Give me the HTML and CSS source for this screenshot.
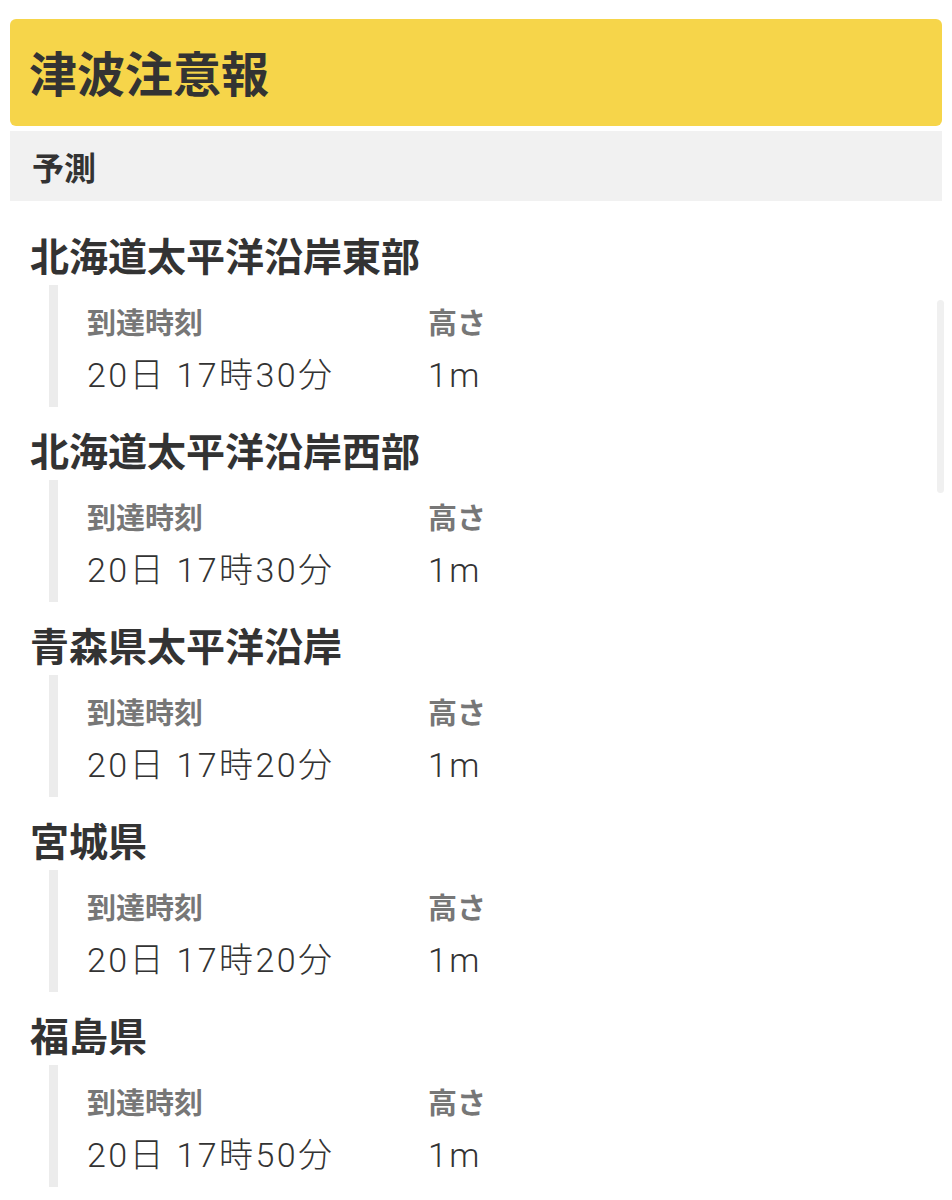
FILE: index.html
```html
<!DOCTYPE html>
<html lang="ja">
<head>
  <meta charset="UTF-8">
  <meta name="viewport" content="width=device-width, initial-scale=1.0">
  <title>津波注意報</title>
  <link rel="stylesheet" href="styles.css">
</head>
<body>
  <h1 class="warning-head">津波注意報</h1>
  <h3 class="sub-head">予測</h3>

  <div class="area-list">
    <div class="area">
      <h2 class="area-name">北海道太平洋沿岸東部</h2>
      <div class="area-info">
        <div class="info-row labels"><span class="col-time">到達時刻</span><span>高さ</span></div>
        <div class="info-row values"><span class="col-time">20日 17時30分</span><span>1m</span></div>
      </div>
    </div>
    <div class="area">
      <h2 class="area-name">北海道太平洋沿岸西部</h2>
      <div class="area-info">
        <div class="info-row labels"><span class="col-time">到達時刻</span><span>高さ</span></div>
        <div class="info-row values"><span class="col-time">20日 17時30分</span><span>1m</span></div>
      </div>
    </div>
    <div class="area">
      <h2 class="area-name">青森県太平洋沿岸</h2>
      <div class="area-info">
        <div class="info-row labels"><span class="col-time">到達時刻</span><span>高さ</span></div>
        <div class="info-row values"><span class="col-time">20日 17時20分</span><span>1m</span></div>
      </div>
    </div>
    <div class="area">
      <h2 class="area-name">宮城県</h2>
      <div class="area-info">
        <div class="info-row labels"><span class="col-time">到達時刻</span><span>高さ</span></div>
        <div class="info-row values"><span class="col-time">20日 17時20分</span><span>1m</span></div>
      </div>
    </div>
    <div class="area">
      <h2 class="area-name">福島県</h2>
      <div class="area-info">
        <div class="info-row labels"><span class="col-time">到達時刻</span><span>高さ</span></div>
        <div class="info-row values"><span class="col-time">20日 17時50分</span><span>1m</span></div>
      </div>
    </div>
  </div>

  <div class="scroll-thumb"></div>
</body>
</html>
```

FILE: styles.css
```css
body {
  margin: 0;
  padding: 19px 10px 0 10px;
  background: #fff;
  color: #333;
  font-family: "Noto Sans CJK JP", "Noto Sans", sans-serif;
  overflow: hidden;
}
h1, h2, h3 {
  margin: 0;
}
.warning-head {
  background: #f6d54a;
  border-radius: 6px;
  height: 107px;
  padding-left: 19px;
  font-size: 48px;
  font-weight: 700;
  line-height: 105px;
}
.sub-head {
  margin-top: 5px;
  background: #f1f1f1;
  height: 70px;
  padding-left: 22px;
  font-size: 32px;
  font-weight: 700;
  line-height: 70px;
}
.area-list {
  padding-top: 27px;
}
.area {
  margin-bottom: 16px;
}
.area-name {
  padding-left: 20px;
  margin-bottom: 4px;
  font-size: 39px;
  font-weight: 700;
  line-height: 53px;
}
.area-info {
  margin-left: 39px;
  border-left: 9px solid #ececec;
  padding: 14px 0 6px 29px;
}
.info-row {
  display: flex;
}
.col-time {
  width: 341px;
}
.labels {
  color: #777;
  font-size: 29px;
  font-weight: 700;
  line-height: 44px;
}
.values {
  margin-top: 6px;
  font-family: "Roboto", "Noto Sans CJK JP", sans-serif;
  font-size: 34px;
  font-weight: 300;
  letter-spacing: 2.4px;
  line-height: 52px;
  color: #333;
}
.scroll-thumb {
  position: absolute;
  left: 937px;
  top: 300px;
  width: 7px;
  height: 193px;
  border-radius: 4px;
  background: #f0f0f0;
}
```
